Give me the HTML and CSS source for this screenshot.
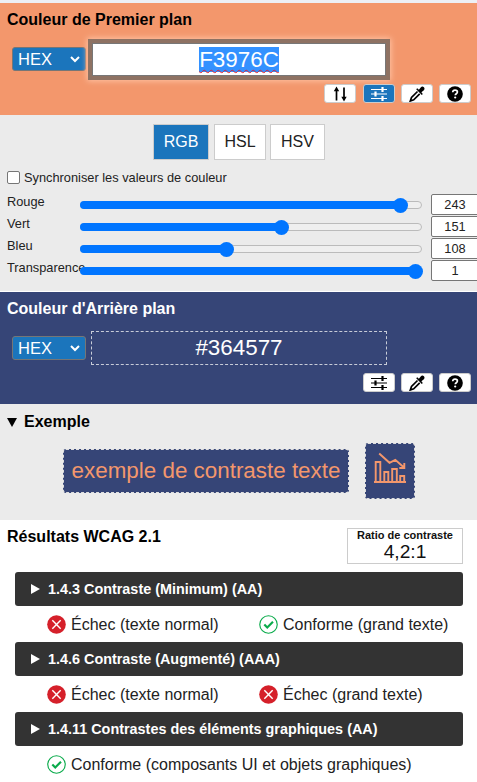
FILE: index.html
```html
<!DOCTYPE html>
<html lang="fr">
<head>
<meta charset="utf-8">
<title>Analyseur de contraste</title>
<link rel="stylesheet" href="styles.css">
</head>
<body>
<svg class="defs" width="0" height="0" aria-hidden="true">
  <symbol id="swap" viewBox="0 0 16 16"><path d="M4.500 14.500V3M12 1.500v11" fill="none" stroke="currentColor" stroke-width="1.700"/><path d="M4.500 .5 7.200 5.200H1.800zM12 15.500 9.300 10.800h5.400z" fill="currentColor"/></symbol>
  <symbol id="sliders" viewBox="0 0 18 16"><path d="M1 3.500h16M1 8h16M1 12.500h16" fill="none" stroke="currentColor" stroke-width="1.200"/><path d="M12.500 1v5M5.500 5.500v5M12.500 10v5" stroke="currentColor" stroke-width="2.200"/></symbol>
  <symbol id="dropper" viewBox="0 0 16 16"><path d="m8.500 5.500-6 6L1.300 15l3.400-1.200 6-6" fill="none" stroke="currentColor" stroke-width="1.700"/><path d="m7.200 3.200 1-1 1.700 1.500 1.800-2.200c1-1.200 2.200-1.200 3.200-.3.900 1 .8 2.200-.3 3.200l-2.200 1.900 1.400 1.600-1 1z" fill="currentColor"/></symbol>
  <symbol id="help" viewBox="0 0 16 16"><circle cx="8" cy="8" r="7.800" fill="currentColor"/><path d="M5.700 6.300c.1-1.500 1-2.200 2.300-2.200 1.400 0 2.400.8 2.400 2 0 1.800-2.100 1.600-2.100 3.200" fill="none" stroke="#fff" stroke-width="1.700"/><circle cx="8.200" cy="11.500" r="1.100" fill="#fff"/></symbol>
  <symbol id="fail" viewBox="0 0 20 20"><circle cx="10" cy="10" r="9.800" fill="#d5202a"/><path d="m5.600 5.600 8.800 8.800m0-8.800-8.800 8.800" stroke="#fff" stroke-width="1.500"/></symbol>
  <symbol id="pass" viewBox="0 0 20 20"><circle cx="10" cy="10" r="9.200" fill="#fff" stroke="#0aab4b" stroke-width="1.200"/><path d="m5.600 10 3.100 3.100 6-6" fill="none" stroke="#0aab4b" stroke-width="2.300"/></symbol>
  <symbol id="chevron" viewBox="0 0 10 8"><path d="m1 2 4 4 4-4" fill="none" stroke="#fff" stroke-width="2"/></symbol>
</svg>

<section class="panel fore">
  <h2>Couleur de Premier plan</h2>
  <div class="entry">
    <div class="select"><span>HEX</span><svg width="10" height="8"><use href="#chevron"/></svg></div>
    <div class="field focused"><span class="selected">F3976C</span></div>
  </div>
  <div class="tools">
    <button class="wide"><svg width="16" height="16"><use href="#swap"/></svg></button>
    <button class="on"><svg width="18" height="16"><use href="#sliders"/></svg></button>
    <button><svg width="16" height="16"><use href="#dropper"/></svg></button>
    <button><svg width="16" height="16"><use href="#help"/></svg></button>
  </div>
</section>

<section class="values">
  <div class="modes"><button class="rgb on">RGB</button><button class="hsl">HSL</button><button class="hsv">HSV</button></div>
  <label class="sync"><i class="check"></i><span>Synchroniser les valeurs de couleur</span></label>
  <div class="rows">
    <div class="row"><span>Rouge</span><div class="track"><div class="fill" style="width:320px"></div></div><div class="num">243</div></div>
    <div class="row"><span>Vert</span><div class="track"><div class="fill" style="width:201px"></div></div><div class="num">151</div></div>
    <div class="row"><span>Bleu</span><div class="track"><div class="fill" style="width:146px"></div></div><div class="num">108</div></div>
    <div class="row"><span>Transparence</span><div class="track"><div class="fill" style="width:335px"></div></div><div class="num">1</div></div>
  </div>
</section>

<section class="panel back">
  <h2>Couleur d'Arrière plan</h2>
  <div class="entry">
    <div class="select"><span>HEX</span><svg width="10" height="8"><use href="#chevron"/></svg></div>
    <div class="field dashed"><span>#364577</span></div>
  </div>
  <div class="tools">
    <button><svg width="18" height="16"><use href="#sliders"/></svg></button>
    <button><svg width="16" height="16"><use href="#dropper"/></svg></button>
    <button><svg width="16" height="16"><use href="#help"/></svg></button>
  </div>
</section>

<section class="example">
  <h2><i class="down"></i><span>Exemple</span></h2>
  <div class="samples">
    <div class="sample-text"><span>exemple de contraste texte</span></div>
    <div class="sample-icon">
      <svg width="34" height="34" viewBox="0 0 34 34" fill="none" stroke="#f3976c" stroke-width="1.900"><path d="M1 30h32M2.700 30V10h4.600v20M11.300 30V20h4v10M19.200 30V17h4.600v13M27.200 30v-6h4v6M6.200 1.500l10.300 9.300 5.800-3L31 15.500M26.300 16h5v-5"/></svg>
    </div>
  </div>
</section>

<section class="results">
  <div class="head">
    <h2>Résultats WCAG 2.1</h2>
    <div class="ratio"><b>Ratio de contraste</b><span>4,2:1</span></div>
  </div>
  <div class="bar"><i></i><span>1.4.3 Contraste (Minimum) (AA)</span></div>
  <div class="outcome">
    <div><svg width="19" height="19"><use href="#fail"/></svg><span>Échec (texte normal)</span></div>
    <div><svg width="19" height="19"><use href="#pass"/></svg><span>Conforme (grand texte)</span></div>
  </div>
  <div class="bar"><i></i><span>1.4.6 Contraste (Augmenté) (AAA)</span></div>
  <div class="outcome">
    <div><svg width="19" height="19"><use href="#fail"/></svg><span>Échec (texte normal)</span></div>
    <div><svg width="19" height="19"><use href="#fail"/></svg><span>Échec (grand texte)</span></div>
  </div>
  <div class="bar"><i></i><span>1.4.11 Contrastes des éléments graphiques (AA)</span></div>
  <div class="outcome">
    <div><svg width="19" height="19"><use href="#pass"/></svg><span>Conforme (composants UI et objets graphiques)</span></div>
  </div>
</section>
</body>
</html>
```
FILE: styles.css
```css
* { box-sizing: border-box; }
body {
  margin: 0;
  height: 782px;
  overflow: hidden;
  background: #fff;
  color: #000;
  font: 16px/20px "Liberation Sans", Arial, sans-serif;
  white-space: nowrap;
}
.defs { display: block; }
svg { flex: none; display: block; }
h2 { margin: 0; font-size: 16px; line-height: 20px; }
button { margin: 0; font: inherit; color: inherit; padding: 0; }

.panel { height: 112px; padding: 0 6px 0 7px; }
.fore { height: 115px; padding-top: 7px; background: #f3976c; border-top: 3px solid #edf0f5; }
.back { padding-top: 7px; background: #364577; color: #fff; }
.entry { display: flex; align-items: center; height: 40px; margin: 9px 0 0 5px; }
.select {
  display: flex;
  align-items: center;
  justify-content: space-between;
  width: 74px;
  height: 24px;
  padding: 0 5px;
  border: 1px solid #767676;
  border-radius: 3px;
  background: #1b75bc;
  color: #fff;
  font-size: 16.500px;
}
.field {
  display: flex;
  align-items: center;
  justify-content: center;
  font-size: 22.400px;
  line-height: 25px;
}
.focused {
  width: 294px;
  height: 33px;
  margin-left: 6px;
  border: 1px solid #777;
  outline: 4px solid #8e7263;
  box-shadow: 0 0 6px 5px #ffc3a5;
  background: #fff;
}
.selected {
  height: 25px;
  background: #3391ff;
  color: #fff;
  text-decoration: underline wavy #e0202c 1px;
  text-underline-offset: 2px;
  text-decoration-skip-ink: none;
}
.dashed { width: 296px; height: 34px; margin-left: 5px; padding-bottom: 1px; border: 1px dashed #c8ccd8; }
.tools { display: flex; justify-content: flex-end; gap: 6px; margin-top: 5px; color: #000; }
.back .tools { margin-top: 5px; }
.tools button {
  display: flex;
  align-items: center;
  justify-content: center;
  width: 32px;
  height: 19px;
  border: 1px solid #ccc;
  border-radius: 3px;
  background: #fff;
}
.tools .wide { margin-right: 1px; }
.tools .on { background: #1b75bc; color: #fff; }

.values { height: 177px; padding: 9px 0 0 7px; background: #ebebeb; border-bottom: 1px solid #fff; }
.modes { display: flex; gap: 5px; margin-left: 146px; }
.modes button { height: 36px; border: 1px solid #ccc; background: #fff; color: #222; }
.modes .rgb { width: 56px; background: #1b75bc; color: #fff; }
.modes .hsl { width: 52px; }
.modes .hsv { width: 55px; margin-left: -1px; }
.sync { display: flex; align-items: center; gap: 4px; height: 18px; margin-top: 9px; font-size: 12.800px; color: #222; }
.check { width: 13px; height: 13px; margin-top: -1px; border: 1px solid #767676; border-radius: 2px; background: #fff; }
.rows { margin-top: 7px; font-size: 12.800px; color: #222; }
.row { display: flex; height: 22px; align-items: center; }
.row > span { flex: none; width: 73px; height: 22px; line-height: 16px; }
.track { width: 342px; height: 8px; margin-top: -1px; border: 1px solid #bbb; border-radius: 4px; background: #efefef; flex: none; }
.fill { position: relative; height: 8px; margin: -1px; border-radius: 4px; background: #0075ff; }
.fill::after { content: ""; position: absolute; right: -8px; top: -3px; width: 15px; height: 15px; border-radius: 50%; background: #0075ff; }
.num {
  flex: none;
  align-self: flex-start;
  width: 55px;
  height: 21px;
  margin-left: 9px;
  padding-right: 7px;
  border: 1px solid #767676;
  border-radius: 2px;
  background: #fff;
  text-align: center;
  line-height: 19px;
  font-size: 12.800px;
}

.example { height: 116px; padding: 8px 0 0 7px; background: #ebebeb; }
.example h2 { display: flex; align-items: center; gap: 7px; }
.down { border: 5px solid transparent; border-top: 9px solid #000; border-bottom: 0; }
.samples { display: flex; align-items: center; gap: 16px; margin: 11px 0 0 56px; color: #f3976c; }
.sample-text, .sample-icon { display: flex; justify-content: center; align-items: center; background: #364577; border: 1px dashed #ddd; border-radius: 3px; }
.sample-text { width: 286px; height: 44px; padding-bottom: 1px; font-size: 22.400px; }
.sample-icon { width: 50px; height: 56px; padding-bottom: 4px; }

.results { padding: 8px 14px 0 15px; }
.head { display: flex; justify-content: space-between; height: 44px; margin-left: -8px; }
.head h2 { margin-top: -1px; }
.ratio { width: 116px; height: 36px; border: 1px solid #ccc; display: flex; flex-direction: column; align-items: center; color: #111; }
.ratio b { font-size: 11px; line-height: 13px; }
.ratio span { font-size: 19.200px; line-height: 20px; }
.bar {
  display: flex;
  align-items: center;
  gap: 8px;
  height: 34px;
  padding-left: 16px;
  border-radius: 3px;
  background: #333;
  color: #fff;
  font-size: 14.400px;
  font-weight: bold;
}
.bar i { border: 5px solid transparent; border-left: 9px solid #fff; border-right: 0; }
.outcome { display: grid; grid-template-columns: 212px 1fr; height: 36px; padding: 1px 0 0 32px; align-items: center; color: #222; }
.outcome div { display: flex; align-items: center; gap: 5px; }
.outcome svg { margin-top: -1px; }
```
